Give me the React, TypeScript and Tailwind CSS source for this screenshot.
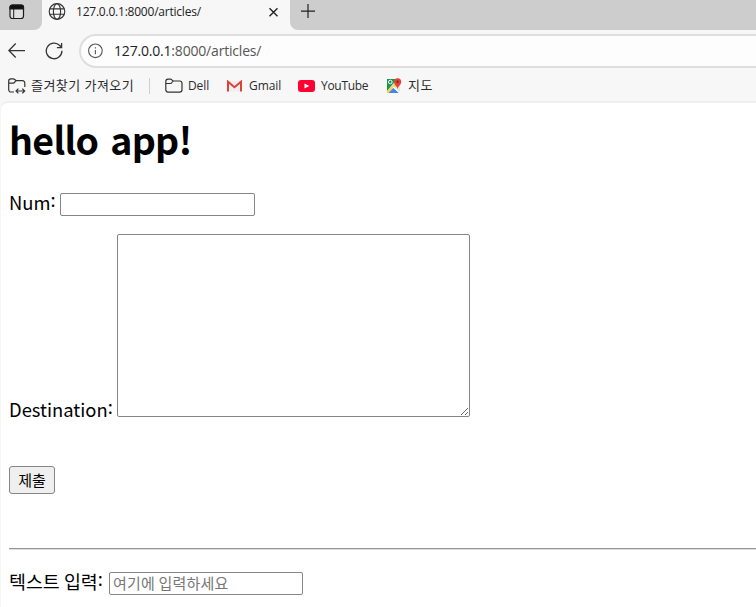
import type { ReactNode } from "react";

const ui = "font-['Open_Sans','Noto_Sans_CJK_KR',sans-serif]";
const page = "font-['Noto_Sans_CJK_KR',sans-serif]";

function Label({ className, children }: { className: string; children: ReactNode }) {
  return <span className={`block shrink-0 whitespace-nowrap ${className}`}>{children}</span>;
}

function Colon() {
  return <span className="align-[3px] leading-none">:</span>;
}

function TabStrip() {
  return (
    <div className="flex h-[30px] bg-[#f7f7f7]">
      <div className="h-[30px] w-[42px] shrink-0 rounded-br-[8px] bg-[#cdcdcd] pl-[9px] pt-1">
        <svg width="16" height="16" viewBox="0 0 16 16" fill="none" stroke="#1b1b1b" strokeWidth="1.2">
          <rect x="1" y="1" width="13.5" height="13.5" rx="2.5" fill="#dedede" />
          <path d="M1 5V3.2A2.2 2.2 0 0 1 3.2 1h9.1a2.2 2.2 0 0 1 2.2 2.2V5z" fill="#111" />
          <path d="M4.7 5v9.5" strokeWidth="1" />
        </svg>
      </div>
      <div className="flex h-[30px] w-[248px] shrink-0 pl-[6px]">
        <svg className="mt-[3px] shrink-0" width="18" height="18" viewBox="0 0 18 18" fill="none" stroke="#333" strokeWidth="1.15">
          <circle cx="9" cy="8.5" r="7.8" />
          <ellipse cx="9" cy="8.5" rx="3.6" ry="7.8" />
          <path d="M1.7 5.8h14.6M1.7 11.2h14.6" />
        </svg>
        <Label className="ml-[10px] mt-[3px] w-[187px] text-[12px] leading-[18px] tracking-[-0.22px] text-[#222]">127.0.0.1:8000/articles/</Label>
        <svg className="ml-[5px] mt-[7px] shrink-0" width="11" height="11" viewBox="0 0 11 11" stroke="#222" strokeWidth="1.4">
          <path d="M1.5 1.3l8 8M9.5 1.3l-8 8" />
        </svg>
      </div>
      <div className="h-[30px] flex-1 rounded-bl-[8px] bg-[#cdcdcd] pl-[10px] pt-[3px]">
        <svg width="16" height="16" viewBox="0 0 16 16" stroke="#222" strokeWidth="1.2">
          <path d="M8 1v14M1 8.2h14" />
        </svg>
      </div>
    </div>
  );
}

function Toolbar() {
  return (
    <div className="flex h-10 pl-2">
      <svg className="mt-3 shrink-0" width="18" height="17" viewBox="0 0 18 17" fill="none" stroke="#333" strokeWidth="1.25">
        <path d="M7.7 1.5L.9 8.5l6.8 7M1 8.5h16" />
      </svg>
      <svg className="ml-[19px] mt-3 shrink-0" width="19" height="18" viewBox="0 0 19 18" fill="none" stroke="#333" strokeWidth="1.3">
        <path d="M16.9 8.8a7.8 7.8 0 1 1-2.2-5.3L16.5 5.3M16.6 1v4.6h-4.7" />
      </svg>
      <div className="ml-[15px] mt-1 flex h-[34px] flex-1 rounded-l-full border-2 border-r-0 border-[#dedede] bg-[#fdfdfd] pl-[7px]">
        <svg className="mt-[7px] shrink-0" width="16" height="16" viewBox="0 0 16 16" fill="none" stroke="#555" strokeWidth="1.1">
          <circle cx="7.4" cy="7.8" r="6.8" />
          <path d="M7.4 6.9v4.3" />
          <path d="M7.4 4.2v1.3" />
        </svg>
        <Label className="ml-[10px] mt-[5px] text-[14px] leading-5 tracking-[-0.19px] text-[#555]"><span className="text-[#222]">127.0.0.1</span>:8000/articles/</Label>
      </div>
    </div>
  );
}

function Bookmarks() {
  return (
    <div className="flex h-[31px] pl-2 text-[12px] leading-[18px] text-[#2c2c2c]">
      <svg className="mt-2 shrink-0" width="18" height="17" viewBox="0 0 18 17" fill="none" stroke="#333" strokeWidth="1.2">
        <path d="M6 14H3a2.3 2.3 0 0 1-2.3-2.3V3A2.2 2.2 0 0 1 2.9.8h2.4c1.5 0 1.8 1.8 3.2 1.8h6A2.3 2.3 0 0 1 16.8 5v4M.8 5.2h4.5c1.5 0 1.7-2.6 3.2-2.6" />
        <path d="M8.2 13h8.3M10.4 10.6L8 13l2.4 2.4M14.3 10.6l2.4 2.4-2.4 2.4" />
      </svg>
      <Label className="ml-[5px] mt-[6px] w-[103px] text-[13px] tracking-[0.45px]">즐겨찾기 가져오기</Label>
      <div className="ml-[15px] mt-2 h-[16px] w-px shrink-0 bg-[#cfcfcf]" />
      <svg className="ml-[15px] mt-2 shrink-0" width="18" height="16" viewBox="0 0 18 16" fill="none" stroke="#333" strokeWidth="1.2">
        <path d="M.8 3.5A2.3 2.3 0 0 1 3 1.2h2.5c1.4 0 1.8 1.8 3.2 1.8h6a2.3 2.3 0 0 1 2.3 2.3v6.5a2.3 2.3 0 0 1-2.3 2.3H3a2.3 2.3 0 0 1-2.2-2.3zM.8 5.5h4.7C7 5.5 7.2 3 8.7 3" />
      </svg>
      <Label className="ml-[5px] mt-[7px] w-[22px] tracking-[-0.1px]">Dell</Label>
      <svg className="ml-4 mt-[10px] shrink-0" width="17" height="12" viewBox="0 0 17 12">
        <path d="M1 1h15v10.5H1z" fill="#eee" />
        <path d="M2 11.5V1.7l6.5 5.5L15 1.7v9.8" fill="none" stroke="#db4437" strokeWidth="2" />
      </svg>
      <Label className="ml-[6px] mt-[7px] w-8 tracking-[-0.05px]">Gmail</Label>
      <svg className="ml-[17px] mt-[10px] shrink-0" width="17" height="12" viewBox="0 0 17 12">
        <rect width="17" height="12" rx="3" fill="#ff0033" />
        <path d="M6.5 3.4v5.2L11.3 6z" fill="#fff" />
      </svg>
      <Label className="ml-[6px] mt-[7px] w-12 tracking-[-0.3px]">YouTube</Label>
      <svg className="ml-[17px] mt-2 shrink-0" width="16" height="16" viewBox="0 0 16 16">
        <path d="M1 1h13v13H1z" fill="#e5e5e5" />
        <path d="M1 1h10L1 13z" fill="#169653" />
        <path d="M1 13L12.5 1.8 14 4 3 15H1z" fill="#f8d24a" />
        <path d="M2.5 15l5-5 6 5z" fill="#4285f4" />
        <path d="M6.8 8.6L13.8 15" stroke="#fff" strokeWidth="1.2" />
        <circle cx="4.3" cy="4" r="1.8" fill="none" stroke="#fff" />
        <path d="M11.6.2A3.7 3.7 0 0 0 8 4c0 2.5 2.6 3.5 3.6 7 1-3.5 3.6-4.5 3.6-7A3.7 3.7 0 0 0 11.6.2z" fill="#df4536" />
        <circle cx="11.6" cy="3.8" r="1.2" fill="#842a22" />
      </svg>
      <Label className="ml-[6px] mt-[6px] text-[13px] tracking-[0.5px]">지도</Label>
    </div>
  );
}

export default function App() {
  return (
    <div className={`h-[607px] w-[756px] overflow-hidden bg-[#f7f7f7] ${ui}`}>
      <TabStrip />
      <Toolbar />
      <Bookmarks />
      <main className={`h-[506px] rounded-tl-[8px] border-l border-t-2 border-l-[#f5f5f5] border-t-[#efefef] bg-white pl-2 text-[18.4px] text-black ${page}`}>
        <h1 className="mt-[7px] h-[60px] whitespace-nowrap text-[37.5px] font-bold leading-[58px] tracking-[-0.7px] [word-spacing:4px]">hello app!</h1>
        <div className="mt-[20px] flex h-7">
          <Label className="-mt-[2px] w-[51px] leading-7">Num<Colon /></Label>
          <input className="mt-[3px] h-[23px] w-[195px] rounded-[2px] border border-[#858585] bg-white outline-none" />
        </div>
        <div className="mt-[16px] flex h-[190px] items-end">
          <Label className="mb-px w-[108px] leading-7">Destination<Colon /></Label>
          <textarea className="mb-[7px] h-[183px] w-[353px] resize rounded-[2px] border border-[#858585] bg-white outline-none" />
        </div>
        <button className="mt-[42px] block h-[28px] w-[46px] rounded-[3px] border border-[#858585] bg-[#efefef] text-[15px] leading-[26px]">제출</button>
        <hr className="mt-[54px] h-[2px] border-b border-t border-b-[#dedede] border-t-[#969696]" />
        <div className="mt-[18px] flex h-7">
          <Label className="-mt-px w-[100px] leading-7">텍스트 입력<Colon /></Label>
          <input placeholder="여기에 입력하세요" className="mt-[4px] h-[23px] w-[194px] rounded-[2px] border border-[#858585] bg-white px-[3px] pb-[3px] text-[15px] leading-[18px] tracking-[0.2px] outline-none placeholder:text-[#777]" />
        </div>
      </main>
    </div>
  );
}
